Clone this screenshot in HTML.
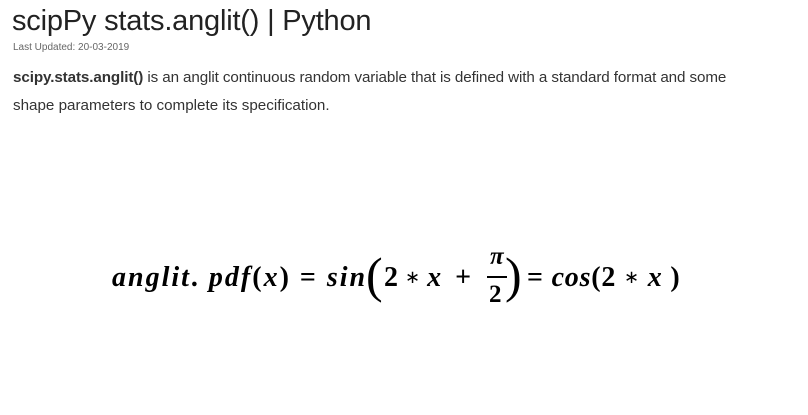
<!DOCTYPE html>
<html><head><meta charset="utf-8"><style>
body{margin:0;width:808px;height:415px;background:#fff;position:relative;overflow:hidden;font-family:"Liberation Sans",sans-serif}
.a{position:absolute;white-space:nowrap}
.m{font-family:"Liberation Serif",serif;font-weight:bold;color:#000}
.s{font-size:18px;vertical-align:3px;font-weight:normal}
</style></head><body>
<div class="a" style="left:12px;top:5px;font-size:29px;color:#222;letter-spacing:-0.2px">scipPy stats.anglit() | Python</div>
<div class="a" style="left:13px;top:42px;font-size:10px;color:#666">Last Updated: 20-03-2019</div>
<div class="a" style="left:13px;top:69px;font-size:15.2px;color:#333;letter-spacing:-0.1px"><b>scipy.stats.anglit()</b> is an anglit continuous random variable that is defined with a standard format and some</div>
<div class="a" style="left:13px;top:97px;font-size:15.2px;color:#333">shape parameters to complete its specification.</div>
<div class="a m" style="left:112px;top:262px;font-size:28px;letter-spacing:2px"><i>anglit</i>. <i>pdf</i>(<i>x</i>) = <i>sin</i></div>
<div class="a m" style="left:366px;top:246px;font-size:50px;font-weight:normal">(</div>
<div class="a m" style="left:384px;top:262px;font-size:28px">2 <span class="s">∗</span> <i>x</i> &nbsp;+</div>
<div class="a m" style="left:490px;top:243px;font-size:25px"><i>π</i></div>
<div class="a" style="left:487px;top:276px;width:20px;height:2px;background:#000"></div>
<div class="a m" style="left:489px;top:281px;font-size:25px">2</div>
<div class="a m" style="left:505px;top:246px;font-size:50px;font-weight:normal">)</div>
<div class="a m" style="left:527px;top:262px;font-size:28px;letter-spacing:0.8px">= <i>cos</i>(2 <span class="s">∗</span> <i>x</i> )</div>
</body></html>
